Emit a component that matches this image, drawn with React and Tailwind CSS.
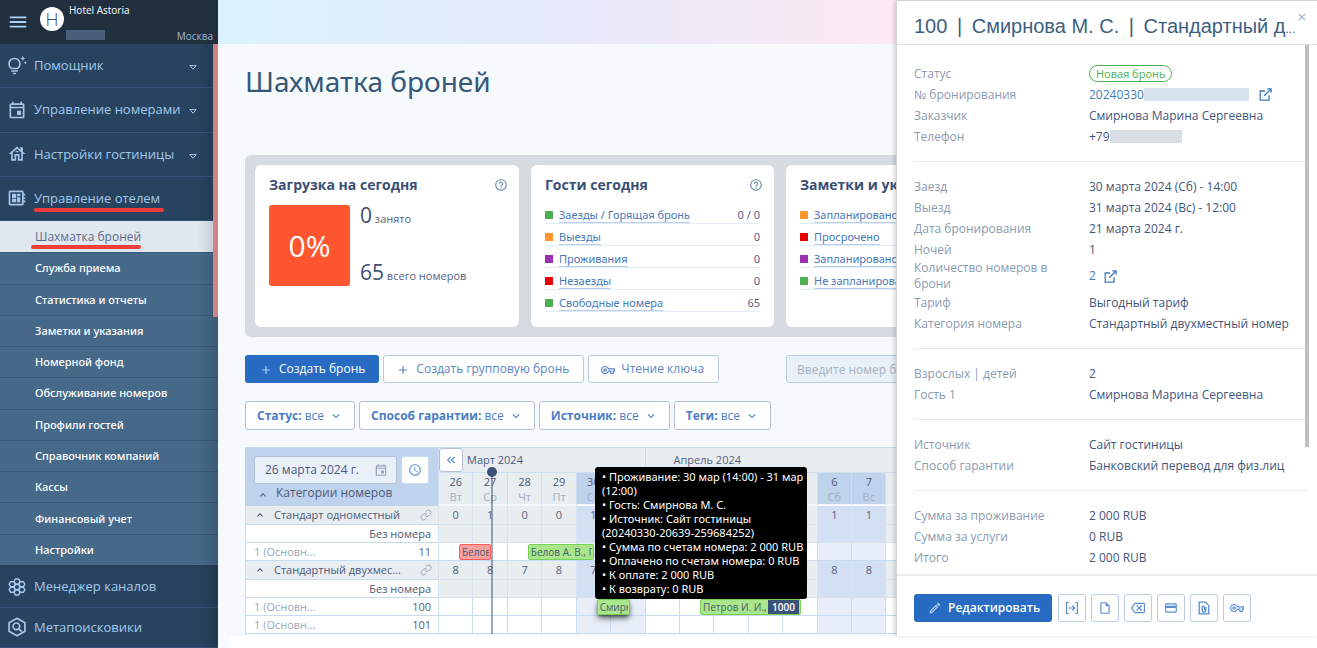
import React from "react";
import {
  MdOutlineTipsAndUpdates,
  MdOutlineEvent,
  MdOutlineHouse,
  MdOutlineDeveloperBoard,
  MdHelpOutline,
  MdOutlineVpnKey,
  MdOutlineInsertDriveFile,
  MdOutlineBackspace,
  MdOutlineCreditCard,
  MdOutlineEdit,
  MdAccessTime,
  MdAdd,
  MdClose,
  MdMenu,
  MdKeyboardArrowDown,
  MdKeyboardArrowUp,
  MdKeyboardDoubleArrowLeft,
} from "react-icons/md";
import { Link as LinkIcon } from "lucide-react";

function HiveIcon() {
  const hex = (cx, cy) => {
    const r = 3.6;
    return [0, 1, 2, 3, 4, 5]
      .map((i) => {
        const a = (Math.PI / 3) * i;
        return `${(cx + r * Math.cos(a)).toFixed(2)},${(cy + r * Math.sin(a)).toFixed(2)}`;
      })
      .join(" ");
  };
  const centers = [[12, 12], [12, 5.4], [12, 18.6], [6.2, 8.7], [17.8, 8.7], [6.2, 15.3], [17.8, 15.3]];
  return (
    <svg viewBox="0 0 24 24" className="size-5" fill="none" stroke="currentColor" strokeWidth="1.8" strokeLinejoin="round" aria-hidden="true">
      {centers.map(([x, y]) => (
        <polygon key={`${x}-${y}`} points={hex(x, y)} />
      ))}
    </svg>
  );
}

function MetaIcon() {
  return (
    <svg viewBox="0 0 24 24" className="size-5" fill="none" stroke="currentColor" strokeWidth="2" strokeLinejoin="round" aria-hidden="true">
      <path d="M12 1.5 21.5 7v10L12 22.5 2.5 17V7z" />
      <circle cx="11.2" cy="11.2" r="4" />
      <path d="m14.2 14.2 3.4 3.4" />
    </svg>
  );
}

function CaretIcon() {
  return (
    <svg viewBox="0 0 8 5" className="h-[5px] w-2" fill="none" stroke="currentColor" aria-hidden="true">
      <path d="M.8.6h6.4L4 4.2z" />
    </svg>
  );
}

function CheckInIcon() {
  return (
    <svg viewBox="0 0 16 16" className="size-4" fill="none" stroke="currentColor" strokeWidth="1.2" aria-hidden="true">
      <path d="M4.5 2.5h-2v11h2M11.5 2.5h2v11h-2M4.5 8h6M8.2 5.4 10.8 8l-2.6 2.6" />
    </svg>
  );
}

function AttachedDocIcon() {
  return (
    <svg viewBox="0 0 16 16" className="size-4" fill="none" stroke="currentColor" strokeWidth="1.3" aria-hidden="true">
      <path d="M3.2 2.2h6.4l3.2 3.2v8.4H3.2z" />
      <path d="M9.8 7v3.6a1.8 1.8 0 0 1-3.6 0V7.2a1.1 1.1 0 0 1 2.2 0v3.4" />
    </svg>
  );
}

function OpenIcon() {
  return (
    <svg viewBox="0 0 13 13" className="size-[13px]" fill="none" stroke="currentColor" strokeWidth="1.3" aria-hidden="true">
      <path d="M6 3H1.2v9.2H10V7.2M8.2.9h3.9v3.9M12 1 5.2 7.8" />
    </svg>
  );
}

const topMenu = [
  { label: "Помощник", icon: <MdOutlineTipsAndUpdates className="size-5" />, caret: true },
  { label: "Управление номерами", icon: <MdOutlineEvent className="size-5" />, caret: true },
  { label: "Настройки гостиницы", icon: <MdOutlineHouse className="size-5" />, caret: true },
  { label: "Управление отелем", icon: <MdOutlineDeveloperBoard className="size-5" />, marked: true },
];

const subMenu = [
  "Шахматка броней",
  "Служба приема",
  "Статистика и отчеты",
  "Заметки и указания",
  "Номерной фонд",
  "Обслуживание номеров",
  "Профили гостей",
  "Справочник компаний",
  "Кассы",
  "Финансовый учет",
  "Настройки",
];

const bottomMenu = [
  { label: "Менеджер каналов", icon: <HiveIcon /> },
  { label: "Метапоисковики", icon: <MetaIcon /> },
];

function MenuRow({ item }) {
  return (
    <a href="#" className="flex items-center border-b border-[#34567a] pl-[7px] pr-[21px] text-[13px] text-[#a5c8ec]">
      <span className="flex w-[27px] shrink-0">{item.icon}</span>
      <span className="relative whitespace-nowrap leading-[19px]">
        {item.label}
        {item.marked && <span className="absolute -right-1 left-0 top-full h-1 rounded-full bg-[#f03a3a]" />}
      </span>
      {item.caret && (
        <span className="ml-auto pt-1">
          <CaretIcon />
        </span>
      )}
    </a>
  );
}

function Sidebar() {
  return (
    <aside className="relative flex w-[218px] shrink-0 flex-col bg-[#27435f]">
      <header className="flex h-11 shrink-0 bg-[#212f3f] pl-[7px] pr-[5px]">
        <button type="button" aria-label="Меню" className="text-[#a5d3f7]">
          <MdMenu className="size-[22px]" />
        </button>
        <span className="ml-[11px] mt-[7px] flex size-6 shrink-0 items-center justify-center rounded-full bg-white text-[18px] font-light text-[#3c4a6b]">
          H
        </span>
        <div className="ml-[5px] flex min-w-0 flex-1 flex-col text-[10px] leading-4 text-white">
          <span className="mt-0.5">Hotel Astoria</span>
          <div className="flex flex-1 items-end justify-between">
            <span className="-ml-[3px] mb-1 h-2.5 w-[39px] bg-[#4a5f77]" />
            <span className="text-[#a3b6cc]">Москва</span>
          </div>
        </div>
      </header>
      <nav aria-label="Главное меню" className="relative flex flex-1 flex-col">
        <div className="grid h-[177px] shrink-0 auto-rows-fr">
          {topMenu.map((item) => (
            <MenuRow key={item.label} item={item} />
          ))}
        </div>
        <ul className="grid h-[344px] shrink-0 auto-rows-fr bg-[#46698a] text-white">
          {subMenu.map((label, i) => (
            <li
              key={label}
              className={i === 0 ? "bg-[#e0e8ef] text-[12px] text-[#5c6b8c]" : "border-t border-[#39597a] font-['Noto_Sans'] text-[11px] font-medium"}
            >
              <a href="#" className="flex h-full items-center pl-[35px]" aria-current={i === 0 ? "page" : undefined}>
                <span className="relative leading-4">
                  {label}
                  {i === 0 && <span className="absolute -left-1 right-0 top-full h-1 rounded-full bg-[#ee3d3d]" />}
                </span>
              </a>
            </li>
          ))}
        </ul>
        <div className="grid flex-1 auto-rows-fr pt-0.5">
          {bottomMenu.map((item) => (
            <MenuRow key={item.label} item={item} />
          ))}
        </div>
        <span className="pointer-events-none absolute inset-y-0 right-0 w-5 bg-linear-to-l from-black/15 to-transparent" />
        <span className="absolute right-0 top-0 h-[273px] w-[5px] bg-[#cc8484]" />
      </nav>
    </aside>
  );
}

const guestStats = [
  { label: "Заезды / Горящая бронь", value: "0 / 0", color: "bg-[#4caf50]" },
  { label: "Выезды", value: "0", color: "bg-[#ff962b]" },
  { label: "Проживания", value: "0", color: "bg-[#9c2fb0]" },
  { label: "Незаезды", value: "0", color: "bg-[#e80000]" },
  { label: "Свободные номера", value: "65", color: "bg-[#4caf50]" },
];

const noteStats = [
  { label: "Запланировано на сегодня", value: "0", color: "bg-[#ff962b]" },
  { label: "Просрочено", value: "0", color: "bg-[#e80000]" },
  { label: "Запланировано на завтра", value: "0", color: "bg-[#9c2fb0]" },
  { label: "Не запланировано", value: "0", color: "bg-[#4caf50]" },
];

function StatCard({ title, width, children }) {
  return (
    <section className={`${width} h-[162px] shrink-0 rounded-md bg-white pl-3.5 pr-[11px] pt-2.5`}>
      <div className="flex items-center justify-between">
        <h2 className="whitespace-nowrap text-[14px] font-bold leading-5 text-[#3b4f74]">{title}</h2>
        <button type="button" aria-label="Справка" className="text-[#7390ad]">
          <MdHelpOutline className="size-3.5" />
        </button>
      </div>
      {children}
    </section>
  );
}

function StatList({ items }) {
  return (
    <ul className="mr-[3px] mt-3 grid gap-[5px] font-['Noto_Sans'] text-[11px] leading-4">
      {items.map((it) => (
        <li key={it.label} className="flex items-center border-b border-[#e3ecf6] text-[#56627e]">
          <span className={`mr-1.5 size-2 shrink-0 ${it.color}`} />
          <a href="#" className="whitespace-nowrap border-b border-[#b5d0ee] leading-[14px] text-[#4679b8]">
            {it.label}
          </a>
          <span className="ml-auto">{it.value}</span>
        </li>
      ))}
    </ul>
  );
}

function FilterButton({ name }) {
  return (
    <button type="button" className="flex h-[29px] items-center gap-[5px] whitespace-nowrap rounded-[3px] border border-[#b3c0d2] bg-white px-[11px] text-[12px] text-[#4a7dc4]">
      <span>
        <b>{name}:</b> все
      </span>
      <MdKeyboardArrowDown className="size-3.5" />
    </button>
  );
}

const days = [
  ["26", "Вт"], ["27", "Ср"], ["28", "Чт"], ["29", "Пт"], ["30", "Сб"], ["31", "Вс"], ["1", "Пн"],
  ["2", "Вт"], ["3", "Ср"], ["4", "Чт"], ["5", "Пт"], ["6", "Сб"], ["7", "Вс"], ["8", "Пн"],
];
const isWeekend = (i) => days[i][1] === "Сб" || days[i][1] === "Вс";

const rows = [
  { kind: "group", label: "Стандарт одноместный", counts: [0, 1, 0, 0, 1, 1, 1, 1, 1, 1, 1, 1, 1, 1] },
  { kind: "none" },
  { kind: "room", room: "11", bookings: { 0: { text: "Белов", w: "w-8", tone: "red" }, 2: { text: "Белов А. В., Г", w: "w-[66px]", tone: "green" } } },
  { kind: "group", label: "Стандартный двухмес...", counts: [8, 8, 7, 8, 7, 8, 8, 7, 7, 8, 8, 8, 8, 8] },
  { kind: "none" },
  { kind: "room", room: "100", bookings: { 4: { text: "Смирнова", w: "w-[33px]", tone: "green", raised: true }, 7: { text: "Петров И. И.,", w: "w-[101px]", tone: "green", tag: "1000" } } },
  { kind: "room", room: "101", bookings: {} },
];

function Booking({ data }) {
  const tone = data.tone === "red" ? "border-[#ff5a5a] bg-[#f6a0a0]" : "border-[#76d05a] bg-[#a9e68c]";
  return (
    <button
      type="button"
      className={`absolute left-5 top-px z-10 flex h-4 items-center overflow-hidden whitespace-nowrap rounded-xs border pl-0.5 pr-px text-[10px] leading-[14px] text-[#4a5d6e] ${data.w} ${tone} ${data.raised ? "shadow-md shadow-black/60" : ""}`}
    >
      <span className="min-w-0 flex-1 overflow-hidden text-left">{data.text}</span>
      {data.tag && <span className="ml-px flex h-3.5 shrink-0 items-center bg-[#3a5278] px-1 text-[10px] font-semibold text-white">{data.tag}</span>}
    </button>
  );
}

function ScheduleRow({ row }) {
  const line = "border-b border-l border-[#c9dbf0]";
  const tall = row.kind === "group";
  return (
    <tr className={tall ? "h-[19px]" : "h-[18px]"}>
      {row.kind === "group" && (
        <th scope="row" className={`bg-[#e8edf1] p-0 font-normal ${line}`}>
          <div className="flex h-[18px] items-center pl-2 pr-1.5 text-[11px] text-[#4c5a78]">
            <MdKeyboardArrowUp className="mr-2 size-3 text-[#3b4f74]" />
            <span>{row.label}</span>
            <LinkIcon className="ml-auto size-3 text-[#9aa7b8]" strokeWidth={2} />
          </div>
        </th>
      )}
      {row.kind === "none" && (
        <th scope="row" className={`bg-white p-0 pr-[7px] text-right text-[11px] font-normal leading-4 text-[#4c5a78] ${line}`}>
          Без номера
        </th>
      )}
      {row.kind === "room" && (
        <th scope="row" className={`bg-white p-0 font-normal ${line}`}>
          <div className="flex justify-between pl-2 pr-[7px] text-[11px] leading-4">
            <span className="text-[#9aa7b8]">1 (Основн...</span>
            <span className="text-[#56627e]">{row.room}</span>
          </div>
        </th>
      )}
      {days.map((d, i) => {
        const plain = row.kind === "room";
        const bg = isWeekend(i) ? (plain ? "bg-[#e7eefa]" : "bg-[#d3e0f3]") : plain ? "bg-white" : "bg-[#e8edf0]";
        const border = plain ? "border-[#c9dbf0]" : "border-[#d8e3f0]";
        return (
          <td key={i} className={`relative border-b border-l p-0 text-center text-[11px] leading-4 text-[#56627e] ${bg} ${border}`}>
            {row.counts && row.counts[i]}
            {row.bookings && row.bookings[i] && <Booking data={row.bookings[i]} />}
          </td>
        );
      })}
    </tr>
  );
}

function Schedule() {
  return (
    <div className="relative mt-[17px] w-[675px]">
      <table className="w-full table-fixed border-separate border-spacing-0 border-t border-[#c9dbf0]">
        <colgroup>
          <col className="w-[193px]" />
          {days.map((d, i) => (
            <col key={i} />
          ))}
        </colgroup>
        <thead>
          <tr className="h-6">
            <th rowSpan={2} className="bg-[#bfd3ec] p-0 align-top font-normal">
              <div className="flex gap-1 px-[9px] pt-2">
                <label className="flex h-7 min-w-0 flex-1 items-center rounded-[3px] border border-[#b3c0d2] bg-[#e9f0f9] pl-2.5 pr-2">
                  <input type="text" aria-label="Дата" defaultValue="26 марта 2024 г." className="w-full min-w-0 bg-transparent text-[12px] text-[#4c5a78] outline-none" />
                  <MdOutlineEvent className="size-3.5 shrink-0 text-[#97a4b8]" />
                </label>
                <button type="button" aria-label="Сейчас" className="flex size-7 items-center justify-center rounded-[3px] border border-[#c9dbf0] bg-white text-[#5a90d4]">
                  <MdAccessTime className="size-3.5" />
                </button>
              </div>
              <div className="flex h-[18px] items-center pl-3 text-[12px] text-[#4c5a78]">
                <MdKeyboardArrowUp className="mr-[7px] mt-1 size-3" />
                Категории номеров
              </div>
            </th>
            <th colSpan={6} className="border-l border-[#c9dbf0] bg-[#e8edf1] p-0 text-left text-[11px] font-normal text-[#4c5a78]">
              <div className="flex items-center gap-1">
                <button type="button" aria-label="Назад" className="flex size-6 items-center justify-center rounded-[3px] border border-[#b3c0d2] bg-white text-[#5a90d4]">
                  <MdKeyboardDoubleArrowLeft className="size-3.5" />
                </button>
                Март 2024
              </div>
            </th>
            <th colSpan={8} className="border-l border-[#c9dbf0] bg-[#e8edf1] p-0 pl-7 text-left text-[11px] font-normal text-[#56627e]">
              Апрель 2024
            </th>
          </tr>
          <tr className="h-[34px]">
            {days.map(([num, name], i) => (
              <th
                key={i}
                className={`border-b-2 border-l border-t border-b-[#f5faff] border-l-[#d0dff0] border-t-[#d0dff0] p-0 text-[11px] font-normal leading-[15px] text-[#4c5a78] ${isWeekend(i) ? "bg-[#bfd3ec]" : "bg-[#e8edf0]"}`}
              >
                {num}
                <span className="block text-[#a5aec0]">{name}</span>
              </th>
            ))}
          </tr>
        </thead>
        <tbody>
          {rows.map((row, i) => (
            <ScheduleRow key={i} row={row} />
          ))}
        </tbody>
      </table>
      <span className="absolute bottom-0 left-[246px] top-6 z-20 w-0.5 bg-[#3a5278]/50" />
      <span className="absolute left-[242px] top-5 z-20 size-[10px] rounded-full bg-[#3a5278]" />
      <div role="tooltip" className="absolute left-[350px] top-5 z-30 w-[212px] rounded-[3px] bg-black py-[3px] pl-[7px] font-['Noto_Sans'] text-[11px] leading-[14px] text-white">
        <p>• Проживание: 30 мар (14:00) - 31 мар (12:00)</p>
        <p>• Гость: Смирнова М. С.</p>
        <p>• Источник: Сайт гостиницы (20240330-20639-259684252)</p>
        <p>• Сумма по счетам номера: 2 000 RUB</p>
        <p>• Оплачено по счетам номера: 0 RUB</p>
        <p>• К оплате: 2 000 RUB</p>
        <p>• К возврату: 0 RUB</p>
      </div>
    </div>
  );
}

const outlineButton = "flex h-7 items-center gap-1.5 whitespace-nowrap rounded-[3px] border border-[#b9c9de] bg-white pl-3 pr-3.5 text-[12px] text-[#5a86c5]";

function Main() {
  return (
    <main className="flex min-w-0 flex-1 flex-col overflow-hidden bg-[#f6fafd]">
      <div className="h-11 shrink-0 bg-linear-to-r from-[#dbf3fe] via-[#e5e9fb] to-[#fde9f2]" />
      <div className="min-h-0 flex-1 pl-[27px]">
        <h1 className="mt-[15px] font-['Noto_Sans'] text-[28px] leading-[44px] text-[#385878]">Шахматка броней</h1>
        <div className="mt-[52px] flex w-[1060px] gap-3 rounded-md bg-[#d6dae1] px-2.5 py-2.5">
          <StatCard title="Загрузка на сегодня" width="w-[264px]">
            <div className="mt-2.5 flex gap-2.5">
              <span className="flex size-[81px] items-center justify-center rounded-[3px] bg-[#ff5630] text-[30px] text-white">0%</span>
              <div className="flex flex-col justify-between text-[11px] leading-5 text-[#56627e]">
                <p>
                  <span className="text-[21px] text-[#3b4f74]">0</span> занято
                </p>
                <p>
                  <span className="text-[21px] text-[#3b4f74]">65</span> всего номеров
                </p>
              </div>
            </div>
          </StatCard>
          <StatCard title="Гости сегодня" width="w-[243px]">
            <StatList items={guestStats} />
          </StatCard>
          <StatCard title="Заметки и указания" width="w-[243px]">
            <StatList items={noteStats} />
          </StatCard>
        </div>
        <div className="mt-[18px] flex items-center gap-1">
          <button type="button" className="flex h-7 items-center gap-1.5 whitespace-nowrap rounded-[3px] bg-[#286bc2] px-3.5 text-[12px] font-medium text-white">
            <MdAdd className="mt-0.5 size-3.5 text-[#a9ccf5]" />
            Создать бронь
          </button>
          <button type="button" className={outlineButton}>
            <MdAdd className="mt-0.5 size-3.5" />
            Создать групповую бронь
          </button>
          <button type="button" className={outlineButton}>
            <MdOutlineVpnKey className="mt-0.5 size-3.5" />
            Чтение ключа
          </button>
          <input
            type="text"
            aria-label="Поиск брони"
            placeholder="Введите номер брони"
            className="ml-[63px] h-7 w-60 shrink-0 rounded-[3px] border border-[#b9c9de] bg-[#e9f0f9] px-2.5 text-[12px] placeholder:text-[#a5b2c4]"
          />
        </div>
        <div className="mt-[18px] flex gap-1">
          {["Статус", "Способ гарантии", "Источник", "Теги"].map((name) => (
            <FilterButton key={name} name={name} />
          ))}
        </div>
        <Schedule />
      </div>
      <div className="ml-[11px] h-3 shrink-0 bg-white" />
    </main>
  );
}

const sections = [
  [
    ["Статус", <span key="s" className="rounded-full border border-[#4caf50] px-1.5 text-[11px] leading-[14px] text-[#4caf50]">Новая бронь</span>],
    [
      "№ бронирования",
      <span key="n" className="flex items-center text-[#3d7cba]">
        <a href="#">20240330</a>
        <span className="mr-2.5 h-[13px] w-[105px] bg-[#d7e3ef]" />
        <OpenIcon />
      </span>,
    ],
    ["Заказчик", "Смирнова Марина Сергеевна"],
    [
      "Телефон",
      <span key="p" className="flex items-center">
        +79
        <span className="h-[13px] w-[72px] bg-[#d9dde4]" />
      </span>,
    ],
  ],
  [
    ["Заезд", "30 марта 2024 (Сб) - 14:00"],
    ["Выезд", "31 марта 2024 (Вс) - 12:00"],
    ["Дата бронирования", "21 марта 2024 г."],
    ["Ночей", "1"],
    [
      "Количество номеров в брони",
      <a key="q" href="#" className="flex items-center gap-2 text-[#3d7cba]">
        2 <OpenIcon />
      </a>,
    ],
    ["Тариф", "Выгодный тариф"],
    ["Категория номера", "Стандартный двухместный номер"],
  ],
  [
    ["Взрослых | детей", "2"],
    ["Гость 1", "Смирнова Марина Сергеевна"],
  ],
  [
    ["Источник", "Сайт гостиницы"],
    ["Способ гарантии", "Банковский перевод для физ.лиц"],
  ],
  [
    ["Сумма за проживание", "2 000 RUB"],
    ["Сумма за услуги", "0 RUB"],
    ["Итого", "2 000 RUB"],
  ],
];

const actions = [
  { label: "Заселить", icon: <CheckInIcon /> },
  { label: "Документ", icon: <MdOutlineInsertDriveFile className="size-3.5" /> },
  { label: "Отменить", icon: <MdOutlineBackspace className="size-3.5" /> },
  { label: "Оплата", icon: <MdOutlineCreditCard className="size-3.5" /> },
  { label: "Вложения", icon: <AttachedDocIcon /> },
  { label: "Ключ", icon: <MdOutlineVpnKey className="size-3.5" /> },
];

function DetailsPanel() {
  return (
    <aside className="relative z-40 mb-3 flex w-[421px] shrink-0 flex-col border-l border-t border-[#d3d3d8] bg-white shadow-[-2px_0_4px_rgba(0,0,0,0.15)]">
      <header className="flex h-11 shrink-0 items-start border-b border-[#dcdee2] pl-[17px] pr-[9px]">
        <h2 className="min-w-0 flex-1 whitespace-nowrap pt-[7px] font-['Liberation_Sans'] text-[20px] leading-9 text-[#3d5f82]">
          100<span className="mx-1"> | </span>Смирнова М. С.<span className="mx-1"> | </span>Стандартный д<span className="text-[12px]">...</span>
        </h2>
        <button type="button" aria-label="Закрыть" className="mt-2.5 text-[#93a9c4]">
          <MdClose className="size-3" />
        </button>
      </header>
      <div className="relative min-h-0 flex-1 overflow-hidden pl-[17px] pr-[9px] pt-1 text-[12px]">
        {sections.map((section, i) => (
          <dl key={i} className="border-b border-[#e6ecf2] py-3.5 last:border-0">
            {section.map(([term, value]) => (
              <div key={term} className="flex items-center">
                <dt className="w-[175px] shrink-0 pr-8 leading-4 text-[#8b9bb0]">
                  <span className="flex min-h-[21px] items-center">{term}</span>
                </dt>
                <dd className="whitespace-nowrap leading-4 text-[#42567b]">{value}</dd>
              </div>
            ))}
          </dl>
        ))}
        <span className="absolute right-2 top-0 h-[402px] w-1 bg-[#c0c0c0]" />
      </div>
      <footer className="flex h-[62px] shrink-0 items-center gap-[5px] border-t-2 border-[#eeeeee] pl-[17px] pt-1">
        <button type="button" className="mr-px flex h-7 items-center gap-1.5 rounded-[3px] bg-[#286bc2] pl-3.5 pr-3 text-[12px] font-semibold text-white">
          <MdOutlineEdit className="size-3.5 text-[#a9ccf5]" />
          Редактировать
        </button>
        {actions.map((a) => (
          <button key={a.label} type="button" aria-label={a.label} className="flex size-7 items-center justify-center rounded-[3px] border border-[#b9cde6] bg-white text-[#5a8fd6]">
            {a.icon}
          </button>
        ))}
      </footer>
    </aside>
  );
}

export default function App() {
  return (
    <div className="flex h-screen min-h-[648px] overflow-hidden bg-white font-['Open_Sans','Noto_Sans',sans-serif]">
      <Sidebar />
      <Main />
      <DetailsPanel />
    </div>
  );
}
